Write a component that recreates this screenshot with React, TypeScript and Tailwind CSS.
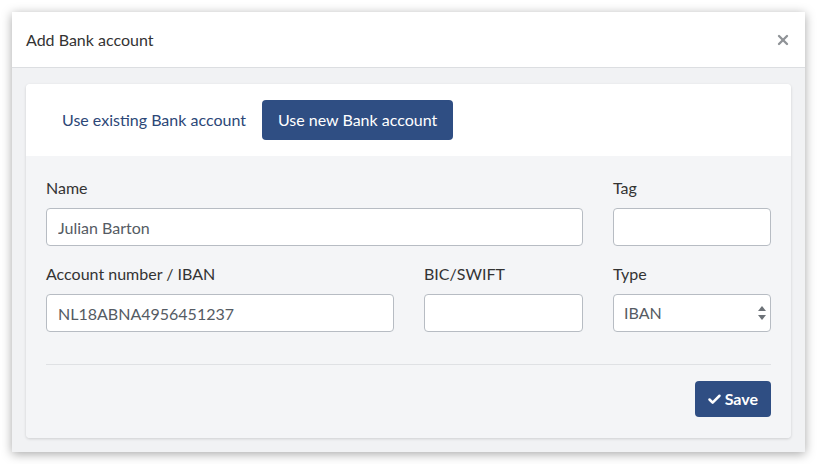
import { Check, X } from "lucide-react";

const inputCls =
  "h-[38px] w-full rounded-[4px] border border-[#b7bcc3] bg-white px-[11px] text-[16px] text-[#555b63] outline-none";

function Field({
  label,
  value,
  className,
}: {
  label: string;
  value?: string;
  className?: string;
}) {
  return (
    <div className={className}>
      <label className="mb-[9px] block h-[22px] text-[16px] leading-[22px] text-[#333]">
        {label}
      </label>
      <input className={inputCls} defaultValue={value} />
    </div>
  );
}

export default function App() {
  return (
    <div className="h-[464px] w-[817px] bg-white pl-[12px] pt-[12px] font-['Lato',sans-serif]">
      <div className="flex h-[440px] w-[793px] flex-col bg-white shadow-[0_2px_10px_rgba(0,0,0,0.35)]">
        {/* Header */}
        <div className="flex h-[56px] items-center justify-between border-b border-[#dcdee1] pl-[14px] pr-[14px]">
          <h1 className="text-[16px] text-[#333]">Add Bank account</h1>
          <X className="h-[16px] w-[16px] text-[#8f9397]" strokeWidth={3.5} />
        </div>

        {/* Body */}
        <div className="flex-1 bg-[#f1f2f4] px-[14px] pt-[16px]">
          <div className="overflow-hidden rounded-[4px] shadow-[0_1px_3px_rgba(0,0,0,0.15)]">
            {/* Tabs */}
            <div className="flex h-[72px] items-center gap-[16px] bg-white pl-[36px]">
              <span className="text-[16px] text-[#2c4777]">Use existing Bank account</span>
              <button className="h-[40px] rounded-[4px] bg-[#2f4e83] px-[16px] text-[16px] text-white">
                Use new Bank account
              </button>
            </div>

            {/* Form */}
            <div className="bg-[#f4f5f7] px-[20px] pb-[21px] pt-[21px]">
              <div className="grid grid-cols-[348px_159px_158px] gap-x-[30px] gap-y-[17px]">
                <Field label="Name" value="Julian Barton" className="col-span-2" />
                <Field label="Tag" />
                <Field label="Account number / IBAN" value="NL18ABNA4956451237" />
                <Field label="BIC/SWIFT" />
                <div>
                  <label className="mb-[9px] block h-[22px] text-[16px] leading-[22px] text-[#333]">
                    Type
                  </label>
                  <div className="relative">
                    <select className={inputCls + " appearance-none pl-[10px]"} defaultValue="IBAN">
                      <option>IBAN</option>
                      <option>BBAN</option>
                    </select>
                    <svg
                      className="pointer-events-none absolute right-[5px] top-[12px]"
                      width="8"
                      height="14"
                      viewBox="0 0 8 14"
                    >
                      <path d="M4 0L8 5H0Z" fill="#6d7278" />
                      <path d="M4 14L8 9H0Z" fill="#6d7278" />
                    </svg>
                  </div>
                </div>
              </div>

              <div className="mt-[32px] border-t border-[#dfe1e4]" />

              <div className="flex justify-end pt-[16px]">
                <button className="flex h-[36px] items-center gap-[3px] rounded-[4px] bg-[#2f4e83] pl-[12px] pr-[13px] text-[16px] font-bold text-white">
                  <Check className="h-[15px] w-[15px]" strokeWidth={4} />
                  Save
                </button>
              </div>
            </div>
          </div>
        </div>
      </div>
    </div>
  );
}
